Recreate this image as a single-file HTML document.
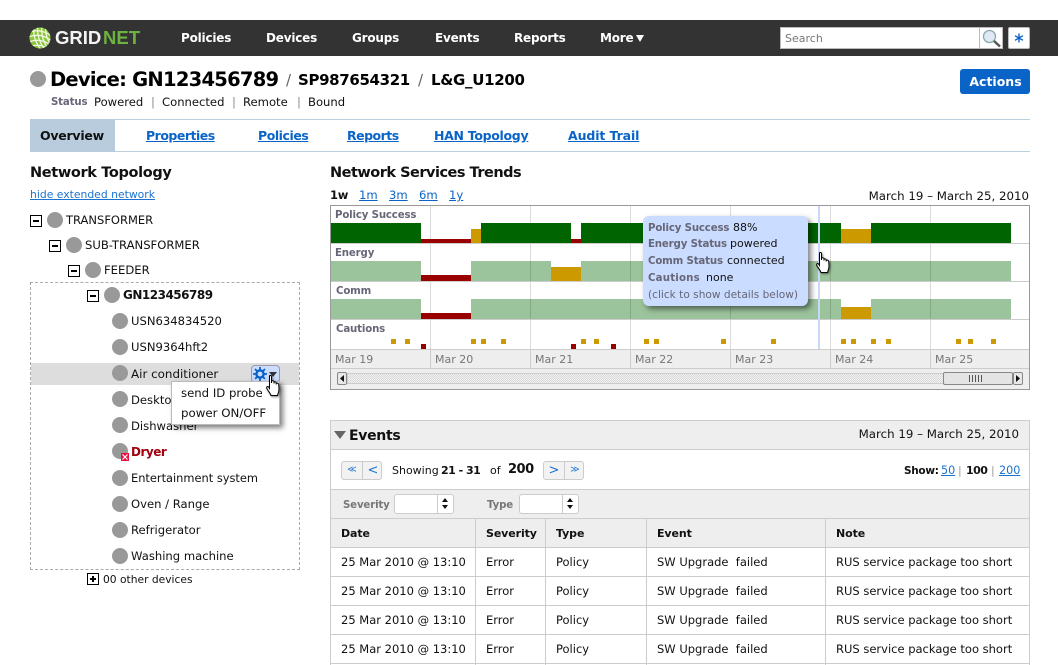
<!DOCTYPE html>
<html><head><meta charset="utf-8"><title>Device GN123456789</title>
<style>
html,body{margin:0;padding:0;background:#fff;height:665px;overflow:hidden}
#w{position:relative;width:1058px;height:665px;overflow:hidden;font-family:"DejaVu Sans","Liberation Sans",sans-serif;font-size:11.6px;color:#111}
.t{position:absolute;white-space:nowrap;line-height:16px;height:16px}
.b{position:absolute;box-sizing:border-box}
.nav{color:#fff;font-weight:bold;font-size:12px;letter-spacing:-.2px}
a{color:#0a64c8;text-decoration:underline}
.tab{font-weight:bold;font-size:12.5px;letter-spacing:-.2px}
.dot{position:absolute;width:16px;height:16px;border-radius:50%;background:#999}
.box{position:absolute;width:12px;height:12px;box-sizing:border-box;border:1px solid #000;background:#fff}
.box:before{content:"";position:absolute;left:2px;top:4px;width:6px;height:2px;background:#000}
.box.p:after{content:"";position:absolute;left:4px;top:2px;width:2px;height:6px;background:#000}
.gl{color:#667;font-weight:bold;font-size:10.2px;letter-spacing:-.15px}
.ax{color:#777;font-size:11px}
.lb{display:inline-block;color:#667;font-weight:bold;font-size:10.2px;letter-spacing:-.15px;margin-right:4px}
.sel{position:absolute;box-sizing:border-box;height:20px;background:#fff;border:1px solid #ccc;border-radius:3px}
.sel i{position:absolute;right:0;top:0;bottom:0;width:15px;border-left:1px solid #ccc}
.sel i:before,.sel i:after{content:"";position:absolute;left:4px;border:3px solid transparent}
.sel i:before{top:0;border-bottom:4px solid #111}
.sel i:after{top:10px;border-top:4px solid #111}
.pg{position:absolute;box-sizing:border-box;height:19px;top:461px;background:#f2f2f2;border:1px solid #ccc;border-radius:3px}
.pg span{position:absolute;top:0;width:20px;text-align:center;color:#1a73d0;line-height:17px;font-size:9px}
table{position:absolute;left:330px;top:518px;width:699px;border-collapse:collapse;table-layout:fixed}
td,th{border:1px solid #ccc;height:29px;padding:0 0 0 10px;font-size:11.5px;font-weight:normal;text-align:left;white-space:nowrap;box-sizing:border-box;overflow:hidden}
th{background:#eee;font-weight:bold;font-size:11px;letter-spacing:-.1px}
</style></head>
<body>
<div id="w">

<!-- top bar -->
<div class="b" style="left:0;top:20px;width:1058px;height:36px;background:#333"></div>
<svg class="b" style="left:29px;top:27px" width="23" height="23" viewBox="0 0 23 23">
<defs><clipPath id="g"><circle cx="11" cy="11" r="10.5"/></clipPath></defs>
<circle cx="11" cy="11" r="10.5" fill="#8cc63f"/>
<g clip-path="url(#g)" stroke="#f4f8e8" stroke-width="1.2" fill="none">
<path d="M-2 6Q11 0 24 10M-2 11Q11 4 24 15M-2 16Q11 9 24 20M-2 21Q11 14 24 25"/>
<path d="M5 -1Q3 12 13 24M9 -1Q7 12 17 24M13 -1Q11 12 21 24M17 -1Q15 10 25 22"/>
</g></svg>
<div class="t" style="left:55px;top:28px;height:20px;line-height:20px;font-family:'Liberation Sans',sans-serif;font-weight:bold;font-size:18.5px;color:#f4f4f4">GRID</div>
<div class="t" style="left:103px;top:28px;height:20px;line-height:20px;font-family:'Liberation Sans',sans-serif;font-weight:bold;font-size:18.5px;color:#6db33f">NET</div>
<div class="t nav" style="left:181px;top:30px">Policies</div>
<div class="t nav" style="left:266px;top:30px">Devices</div>
<div class="t nav" style="left:352px;top:30px">Groups</div>
<div class="t nav" style="left:435px;top:30px">Events</div>
<div class="t nav" style="left:514px;top:30px">Reports</div>
<div class="t nav" style="left:600px;top:30px">More</div>
<div class="b" style="left:636px;top:35px;border:4.5px solid transparent;border-top:7px solid #fff;border-bottom:0"></div>
<div class="b" style="left:780px;top:27px;width:223px;height:22px;background:#fff;border:1px solid #bbb"></div>
<div class="b" style="left:979px;top:28px;width:1px;height:20px;background:#bbb"></div>
<div class="t" style="left:785px;top:31px;font-size:11px;color:#777">Search</div>
<svg class="b" style="left:981px;top:28px" width="21" height="20" viewBox="0 0 21 20"><circle cx="8.5" cy="8.5" r="6" fill="#dfe8f4" stroke="#8aa" stroke-width="1.3"/><path d="M13 13L19 18.5" stroke="#555" stroke-width="2.4"/></svg>
<div class="b" style="left:1008px;top:27px;width:22px;height:22px;background:#fff;border:1px solid #bbb;border-radius:2px"></div>
<svg class="b" style="left:1012px;top:31px" width="14" height="14" viewBox="0 0 14 14"><path d="M7 2.5V11.5M3 4.7L11 9.3M11 4.7L3 9.3" stroke="#0a64c8" stroke-width="1.4"/></svg>

<!-- title -->
<div class="dot" style="left:30px;top:71px"></div>
<div class="t" style="left:50px;top:68px;height:24px;line-height:24px;font-size:19.5px;font-weight:bold;letter-spacing:-.75px;color:#000">Device: GN123456789</div>
<div class="t" style="left:286px;top:71px;height:18px;line-height:18px;font-size:15px;color:#666">/</div>
<div class="t" style="left:298px;top:71px;height:18px;line-height:18px;font-size:15px;font-weight:bold;letter-spacing:-.35px;color:#000">SP987654321</div>
<div class="t" style="left:418px;top:71px;height:18px;line-height:18px;font-size:15px;color:#666">/</div>
<div class="t" style="left:431px;top:71px;height:18px;line-height:18px;font-size:15px;font-weight:bold;letter-spacing:-.3px;color:#000">L&amp;G_U1200</div>
<div class="t gl" style="left:51px;top:95px">Status</div>
<div class="t" style="left:94px;top:94px">Powered</div>
<div class="t" style="left:151px;top:94px;color:#888">|</div>
<div class="t" style="left:162px;top:94px">Connected</div>
<div class="t" style="left:232px;top:94px;color:#888">|</div>
<div class="t" style="left:243px;top:94px">Remote</div>
<div class="t" style="left:297px;top:94px;color:#888">|</div>
<div class="t" style="left:308px;top:94px">Bound</div>
<div class="b" style="left:960px;top:69px;width:70px;height:25px;padding-left:1px;background:#0a64c8;border-radius:3px;color:#fff;font-weight:bold;font-size:12.5px;line-height:26px;text-align:center">Actions</div>

<!-- tabs -->
<div class="b" style="left:30px;top:119px;width:1000px;height:33px;border-top:1px solid #bccfdd;border-bottom:1px solid #bccfdd"></div>
<div class="b" style="left:30px;top:119px;width:85px;height:33px;background:#b9ccdd"></div>
<div class="t tab" style="left:40px;top:128px;color:#111;letter-spacing:-.25px">Overview</div>
<a class="t tab" style="left:146px;top:128px;letter-spacing:-.5px">Properties</a>
<a class="t tab" style="left:258px;top:128px;letter-spacing:-.45px">Policies</a>
<a class="t tab" style="left:347px;top:128px;letter-spacing:-.5px">Reports</a>
<a class="t tab" style="left:434px;top:128px;letter-spacing:-.3px">HAN Topology</a>
<a class="t tab" style="left:568px;top:128px;letter-spacing:-.1px">Audit Trail</a>

<!-- left tree -->
<div class="t" style="left:30px;top:165px;font-size:14.5px;font-weight:bold;letter-spacing:-.35px;color:#111">Network Topology</div>
<a class="t" style="left:30px;top:187px;font-size:10.8px;color:#1a73d0">hide extended network</a>
<div class="b" style="left:30px;top:282px;width:270px;height:288px;border:1px dashed #aaa"></div>
<div class="b" style="left:31px;top:363px;width:268px;height:22px;background:#ddd"></div>

<div class="box" style="left:30px;top:215px"></div><div class="dot" style="left:47px;top:212px"></div><div class="t" style="left:66px;top:212px;font-size:11.5px">TRANSFORMER</div>
<div class="box" style="left:49px;top:240px"></div><div class="dot" style="left:66px;top:237px"></div><div class="t" style="left:85px;top:237px">SUB-TRANSFORMER</div>
<div class="box" style="left:68px;top:265px"></div><div class="dot" style="left:85px;top:262px"></div><div class="t" style="left:104px;top:262px">FEEDER</div>
<div class="box" style="left:87px;top:290px"></div><div class="dot" style="left:104px;top:287px"></div><div class="t" style="left:123px;top:287px;font-size:12px;font-weight:bold;letter-spacing:-.5px">GN123456789</div>

<div class="dot" style="left:112px;top:313px"></div><div class="t" style="left:131px;top:313px">USN634834520</div>
<div class="dot" style="left:112px;top:339px"></div><div class="t" style="left:131px;top:339px">USN9364hft2</div>
<div class="dot" style="left:112px;top:365px"></div><div class="t" style="left:131px;top:366px;font-size:11.9px">Air conditioner</div>
<div class="dot" style="left:112px;top:391px"></div><div class="t" style="left:131px;top:392px">Desktop</div>
<div class="dot" style="left:112px;top:417px"></div><div class="t" style="left:131px;top:418px">Dishwasher</div>
<div class="dot" style="left:112px;top:443px"></div><div class="t" style="left:131px;top:444px;font-size:12px;color:#a00010;font-weight:bold;letter-spacing:-.5px">Dryer</div>
<svg class="b" style="left:121px;top:453px" width="8" height="8" viewBox="0 0 8 8"><rect width="8" height="8" fill="#e8103a"/><path d="M1.5 1.5L6.5 6.5M6.5 1.5L1.5 6.5" stroke="#fff" stroke-width="1.2"/></svg>
<div class="dot" style="left:112px;top:470px"></div><div class="t" style="left:131px;top:470px;font-size:11.4px">Entertainment system</div>
<div class="dot" style="left:112px;top:496px"></div><div class="t" style="left:131px;top:496px">Oven / Range</div>
<div class="dot" style="left:112px;top:522px"></div><div class="t" style="left:131px;top:522px">Refrigerator</div>
<div class="dot" style="left:112px;top:548px"></div><div class="t" style="left:131px;top:548px">Washing machine</div>
<div class="box p" style="left:87px;top:573px"></div><div class="t" style="left:103px;top:572px;font-size:10.7px">00 other devices</div>

<!-- gear button + popup -->
<div class="b" style="left:251px;top:365px;width:29px;height:18px;background:#cbdcff;border:1px solid #99a;border-radius:4px"></div>
<svg class="b" style="left:253px;top:367px" width="14" height="14" viewBox="0 0 14 14"><circle cx="7" cy="7" r="3.6" fill="none" stroke="#0a64c8" stroke-width="2.4"/><path d="M7 0V14M0 7H14M2 2L12 12M12 2L2 12" stroke="#0a64c8" stroke-width="1.8" stroke-dasharray="3 8 3"/></svg>
<div class="b" style="left:269px;top:372px;border:4px solid transparent;border-top:5px solid #333;border-bottom:0"></div>
<div class="b" style="left:171px;top:381px;width:109px;height:44px;background:#fff;border:1px solid #bbb;box-shadow:3px 3px 5px rgba(0,0,0,.5)"></div>
<div class="t" style="left:181px;top:385px;font-size:11.7px;color:#111">send ID probe</div>
<div class="t" style="left:181px;top:405px;font-size:11.8px;color:#111">power ON/OFF</div>
<svg class="b" style="left:266px;top:375px;filter:drop-shadow(1px 1px 1px rgba(0,0,0,.5))" width="16" height="23" viewBox="0 0 16 23"><path d="M3.5 .8C4.5 .1 5.5 .5 5.5 1.7V8V6.2C6.5 5.5 7.7 5.7 8 6.7V8.5V7.2C9 6.6 10 6.9 10.2 7.9V9.5V8.4C11.2 7.9 12.5 8.2 12.7 9.5L13 14C13 17 12 18 11.5 20.5H5C4.5 18.5 2.5 16.5 .8 13.5C.2 12 1.2 11 2.5 12L3.5 13.5Z" fill="#fff" stroke="#000" stroke-width="1"/></svg>

<!-- trends -->
<div class="t" style="left:330px;top:165px;font-size:14.5px;font-weight:bold;letter-spacing:-.5px;color:#111">Network Services Trends</div>
<div class="t" style="left:330px;top:187px;font-weight:bold;font-size:11.5px;letter-spacing:-.2px;color:#111">1w</div>
<a class="t" style="left:359px;top:187px">1m</a>
<a class="t" style="left:389px;top:187px">3m</a>
<a class="t" style="left:419px;top:187px">6m</a>
<a class="t" style="left:449px;top:187px">1y</a>
<div class="t" style="right:29px;top:188px;font-size:11.8px;color:#111">March 19 – March 25, 2010</div>

<svg class="b" style="left:330px;top:205px" width="700" height="185" viewBox="330 205 700 185">
<defs><pattern id="ck" width="2" height="2" patternUnits="userSpaceOnUse"><rect width="2" height="2" fill="#f2f2f2"/><rect width="1" height="1" fill="#d8d8d8"/><rect x="1" y="1" width="1" height="1" fill="#d8d8d8"/></pattern></defs>
<rect x="330.5" y="205.5" width="699" height="184" fill="#fff" stroke="#999"/>
<rect x="331" y="349" width="698" height="40" fill="#eee"/>
<g fill="#9cc49c">
<rect x="331" y="261" width="90" height="20"/><rect x="471" y="261" width="80" height="20"/><rect x="581" y="261" width="430" height="20"/>
<rect x="331" y="299" width="90" height="20"/><rect x="471" y="299" width="370" height="20"/><rect x="871" y="299" width="140" height="20"/>
</g>
<g fill="#000" fill-opacity=".14">
<rect x="430" y="206" width="1" height="162"/><rect x="530" y="206" width="1" height="162"/><rect x="630" y="206" width="1" height="162"/><rect x="730" y="206" width="1" height="162"/><rect x="830" y="206" width="1" height="162"/><rect x="930" y="206" width="1" height="162"/>
</g>
<g fill="#ccc"><rect x="331" y="243" width="698" height="1"/><rect x="331" y="281" width="698" height="1"/><rect x="331" y="319" width="698" height="1"/><rect x="331" y="349" width="698" height="1"/><rect x="331" y="368" width="698" height="1"/></g>
<g fill="#006400"><rect x="331" y="223" width="90" height="20"/><rect x="481" y="223" width="90" height="20"/><rect x="581" y="223" width="260" height="20"/><rect x="871" y="223" width="140" height="20"/></g>
<g fill="#990000">
<rect x="421" y="239" width="50" height="4"/><rect x="571" y="239" width="10" height="4"/>
<rect x="421" y="275" width="50" height="6"/><rect x="421" y="313" width="50" height="6"/>
<rect x="421" y="344" width="5" height="5"/><rect x="571" y="344" width="5" height="5"/><rect x="611" y="344" width="5" height="5"/>
</g>
<g fill="#cc9900">
<rect x="471" y="229" width="10" height="14"/><rect x="841" y="229" width="30" height="14"/>
<rect x="551" y="267" width="30" height="14"/><rect x="841" y="307" width="30" height="12"/>
<rect x="391" y="339" width="5" height="5"/><rect x="405" y="339" width="5" height="5"/><rect x="471" y="339" width="5" height="5"/><rect x="481" y="339" width="5" height="5"/><rect x="501" y="339" width="5" height="5"/><rect x="581" y="339" width="5" height="5"/><rect x="594" y="339" width="5" height="5"/><rect x="644" y="339" width="5" height="5"/><rect x="654" y="339" width="5" height="5"/><rect x="721" y="339" width="5" height="5"/><rect x="771" y="339" width="5" height="5"/><rect x="841" y="339" width="5" height="5"/><rect x="851" y="339" width="5" height="5"/><rect x="871" y="339" width="5" height="5"/><rect x="886" y="339" width="5" height="5"/><rect x="956" y="339" width="5" height="5"/><rect x="968" y="339" width="5" height="5"/><rect x="991" y="339" width="5" height="5"/>
</g>
<rect x="818" y="206" width="2" height="143" fill="#c8d8f8"/>
<!-- scrollbar -->
<rect x="347.5" y="373.5" width="596" height="10" fill="url(#ck)" stroke="#ccc"/>
<rect x="337.5" y="372.5" width="9" height="12" rx="1.5" fill="#e8e8e8" stroke="#888"/><path d="M344 375V382L340 378.5Z" fill="#111"/>
<rect x="943.5" y="372.5" width="69" height="12" rx="1.5" fill="#e4e4e4" stroke="#888"/>
<path d="M969.5 375V382M972.5 375V382M975.5 375V382M978.5 375V382M981.5 375V382" stroke="#555"/>
<rect x="1013.5" y="372.5" width="9" height="12" rx="1.5" fill="#e8e8e8" stroke="#888"/><path d="M1016 375V382L1020 378.5Z" fill="#111"/>
</svg>
<div class="t gl" style="left:335px;top:208px">Policy Success</div>
<div class="t gl" style="left:335px;top:246px">Energy</div>
<div class="t gl" style="left:336px;top:284px">Comm</div>
<div class="t gl" style="left:336px;top:322px">Cautions</div>
<div class="t ax" style="left:335px;top:352px">Mar 19</div>
<div class="t ax" style="left:435px;top:352px">Mar 20</div>
<div class="t ax" style="left:535px;top:352px">Mar 21</div>
<div class="t ax" style="left:635px;top:352px">Mar 22</div>
<div class="t ax" style="left:735px;top:352px">Mar 23</div>
<div class="t ax" style="left:835px;top:352px">Mar 24</div>
<div class="t ax" style="left:935px;top:352px">Mar 25</div>

<!-- tooltip -->
<div class="b" style="left:643px;top:216px;width:165px;height:90px;background:#cadcff;border-radius:6px;box-shadow:3px 3px 6px rgba(0,0,0,.5)"></div>
<div class="t" style="left:648px;top:220px;font-size:11px"><span class="lb" style="width:81px">Policy Success</span>88%</div>
<div class="t" style="left:648px;top:236px;font-size:11px"><span class="lb" style="width:78px">Energy Status</span>powered</div>
<div class="t" style="left:648px;top:253px;font-size:11px"><span class="lb" style="width:75px">Comm Status</span>connected</div>
<div class="t" style="left:648px;top:270px;font-size:11px"><span class="lb" style="width:54px;letter-spacing:.2px">Cautions</span>none</div>
<div class="t" style="left:648px;top:287px;font-size:10.6px;color:#667">(click to show details below)</div>
<svg class="b" style="left:816px;top:252px;filter:drop-shadow(1px 1px 1px rgba(0,0,0,.5))" width="16" height="23" viewBox="0 0 16 23"><path d="M3.5 .8C4.5 .1 5.5 .5 5.5 1.7V8V6.2C6.5 5.5 7.7 5.7 8 6.7V8.5V7.2C9 6.6 10 6.9 10.2 7.9V9.5V8.4C11.2 7.9 12.5 8.2 12.7 9.5L13 14C13 17 12 18 11.5 20.5H5C4.5 18.5 2.5 16.5 .8 13.5C.2 12 1.2 11 2.5 12L3.5 13.5Z" fill="#fff" stroke="#000" stroke-width="1"/></svg>

<!-- events -->
<div class="b" style="left:330px;top:420px;width:700px;height:245px;border:1px solid #ccc;border-bottom:0"></div>
<div class="b" style="left:330px;top:420px;width:700px;height:30px;background:#eee;border:1px solid #ccc"></div>
<div class="b" style="left:334px;top:431px;border:6px solid transparent;border-top:8px solid #666;border-bottom:0"></div>
<div class="t" style="left:349px;top:428px;font-size:14px;font-weight:bold;letter-spacing:-.3px;color:#111">Events</div>
<div class="t" style="right:39px;top:426px;font-size:11.8px;color:#111">March 19 – March 25, 2010</div>
<div class="pg" style="left:341px;width:41px"><span style="left:0">≪</span><span style="left:20px;border-left:1px solid #ccc;font-size:13px">&lt;</span></div>
<div class="t" style="left:392px;top:463px;font-size:11px">Showing</div>
<div class="t" style="left:441px;top:463px;font-size:11px;font-weight:bold;letter-spacing:-.5px">21 - 31</div>
<div class="t" style="left:490px;top:463px;font-size:11px">of</div>
<div class="t" style="left:508px;top:462px;font-size:13px;font-weight:bold;letter-spacing:-.5px">200</div>
<div class="pg" style="left:543px;width:41px"><span style="left:0;font-size:13px">&gt;</span><span style="left:20px;border-left:1px solid #ccc">≫</span></div>
<div class="t" style="left:904px;top:463px;font-size:10.5px;font-weight:bold;letter-spacing:-.3px">Show:</div>
<a class="t" style="left:941px;top:463px;font-size:11.2px;color:#1a73d0">50</a>
<div class="t" style="left:958px;top:463px;color:#999;font-size:11px">|</div>
<div class="t" style="left:966px;top:463px;font-size:11px;font-weight:bold;letter-spacing:-.5px">100</div>
<div class="t" style="left:991px;top:463px;color:#999;font-size:11px">|</div>
<a class="t" style="left:999px;top:463px;font-size:11.2px;color:#1a73d0">200</a>
<div class="b" style="left:330px;top:489px;width:700px;height:30px;background:#eee;border:1px solid #ccc"></div>
<div class="t gl" style="left:343px;top:498px;color:#777">Severity</div>
<div class="sel" style="left:394px;top:494px;width:60px"><i></i></div>
<div class="t gl" style="left:487px;top:498px;color:#777">Type</div>
<div class="sel" style="left:519px;top:494px;width:60px"><i></i></div>

<table>
<colgroup><col style="width:145px"><col style="width:70px"><col style="width:101px"><col style="width:179px"><col style="width:204px"></colgroup>
<tr><th>Date</th><th>Severity</th><th>Type</th><th>Event</th><th>Note</th></tr>
<tr><td>25 Mar 2010 @ 13:10</td><td>Error</td><td>Policy</td><td>SW Upgrade&nbsp; failed</td><td>RUS service package too short</td></tr>
<tr><td>25 Mar 2010 @ 13:10</td><td>Error</td><td>Policy</td><td>SW Upgrade&nbsp; failed</td><td>RUS service package too short</td></tr>
<tr><td>25 Mar 2010 @ 13:10</td><td>Error</td><td>Policy</td><td>SW Upgrade&nbsp; failed</td><td>RUS service package too short</td></tr>
<tr><td>25 Mar 2010 @ 13:10</td><td>Error</td><td>Policy</td><td>SW Upgrade&nbsp; failed</td><td>RUS service package too short</td></tr>
<tr><td>&nbsp;</td><td></td><td></td><td></td><td></td></tr>
</table>
</div>
</body></html>
